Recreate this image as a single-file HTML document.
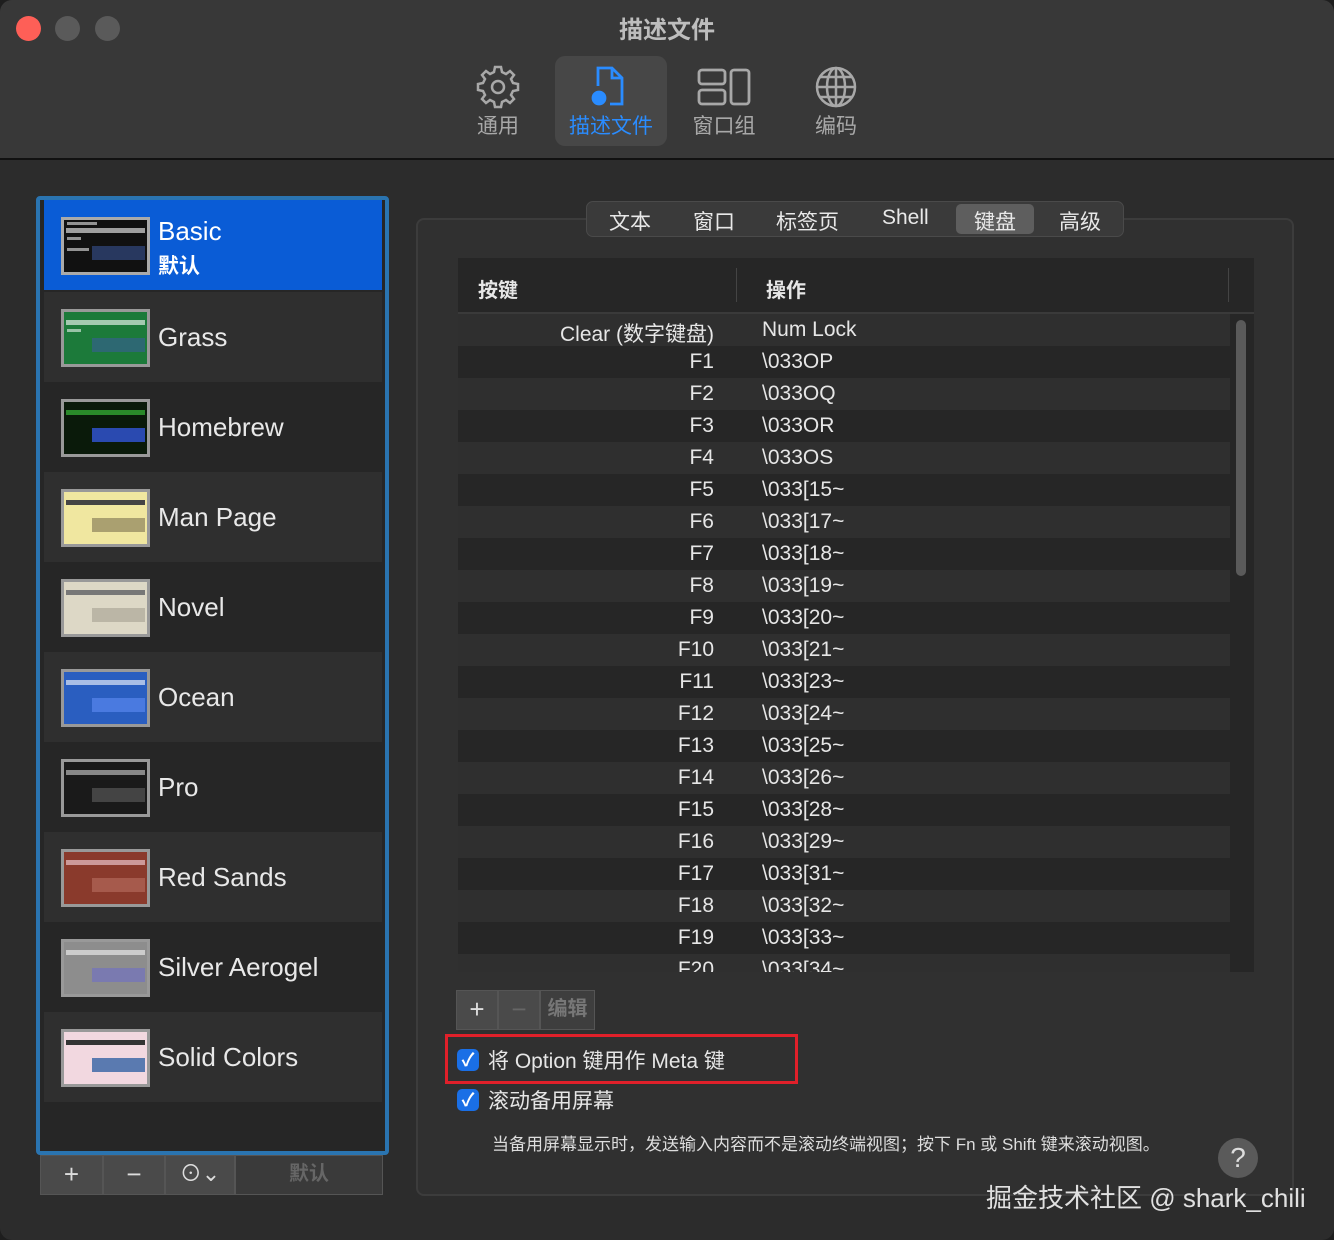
<!DOCTYPE html>
<html><head><meta charset="utf-8"><style>
*{margin:0;padding:0;box-sizing:border-box}
body{width:1334px;height:1240px;background:#1e1e1e;font-family:"Liberation Sans","Noto Sans CJK SC",sans-serif;color:#e6e6e6;position:relative;overflow:hidden}
.win{position:absolute;left:0;top:0;width:1334px;height:1240px;background:#2c2c2c;border-radius:12px;overflow:hidden}
.tb{position:absolute;left:0;top:0;width:1334px;height:160px;background:#383838;border-bottom:2px solid #111}
.dot{position:absolute;top:16px;width:25px;height:25px;border-radius:50%}
.title{position:absolute;top:10px;left:0;width:1334px;text-align:center;font-size:24px;font-weight:bold;color:#bdbdbd}
.tool{position:absolute;top:56px;width:112px;height:90px;text-align:center;font-size:21px;color:#a8a8a8}
.tool svg{display:block;margin:8px auto 0}
.tool span{display:block;margin-top:0}
.list{position:absolute;left:36px;top:196px;width:353px;height:959px;border:4px solid #2a74b0;border-radius:4px;background:#262626;overflow:hidden}
.item{position:absolute;left:4px;width:338px;height:90px}
.thumb{position:absolute;left:17px;top:17px;width:89px;height:58px;border:3px solid #999;overflow:hidden}
.thumb i{position:absolute;left:3px;height:3px;background:rgba(255,255,255,.55)}
.thumb b{position:absolute;left:2px;right:2px;top:8px;height:5px;background:rgba(255,255,255,.6)}
.thumb u{position:absolute;left:28px;right:2px;top:26px;height:14px;background:rgba(60,90,160,.55)}
.name{position:absolute;left:114px;font-size:26px;color:#e8e8e8}
.panel{position:absolute;left:416px;top:218px;width:878px;height:978px;border:2px solid #3c3c3c;border-radius:8px;background:#303030}
.seg{position:absolute;left:586px;top:201px;width:538px;height:36px;background:#3a3a3a;border:1px solid #4a4a4a;border-radius:7px;font-size:21px;color:#e8e8e8}
.seg span{position:absolute;top:4px}
.tbl{position:absolute;left:458px;top:258px;width:796px;height:714px;background:#262626;overflow:hidden}
.hdr{position:absolute;left:0;top:0;width:796px;height:54px;background:#262626;font-size:20px;font-weight:bold}
.row{position:absolute;left:0;width:772px;height:32px;font-size:21px}
.row .k{position:absolute;right:516px;top:4px;white-space:nowrap}
.row .v{position:absolute;left:304px;top:4px;white-space:nowrap}
.cb{position:absolute;width:22px;height:22px;background:#1a6fe6;border-radius:5px;color:#fff;font-size:18px;text-align:center;line-height:22px;font-weight:bold}
.btn{position:absolute;height:40px;background:#4a4a4a;border:1px solid #555;color:#ddd;text-align:center;font-size:26px;line-height:36px}
</style></head><body>
<div class="win">
<div class="tb">
<div class="dot" style="left:16px;background:#fe5f57"></div>
<div class="dot" style="left:55px;background:#5a5a5a"></div>
<div class="dot" style="left:95px;background:#5a5a5a"></div>
<div class="title">描述文件</div>
<div class="tool" style="left:442px"><svg width="46" height="46" viewBox="0 0 46 46" fill="none" stroke="#a8a8a8" stroke-width="2.5"><path d="M20 3h6l1 5 4 2 4-3 4 4-3 4 2 4 5 1v6l-5 1-2 4 3 4-4 4-4-3-4 2-1 5h-6l-1-5-4-2-4 3-4-4 3-4-2-4-5-1v-6l5-1 2-4-3-4 4-4 4 3 4-2z"/><circle cx="23" cy="23" r="6"/></svg><span>通用</span></div>
<div class="tool" style="left:555px;background:#474747;border-radius:10px;color:#2a8cff"><svg width="46" height="46" viewBox="0 0 46 46" fill="none" stroke="#2a8cff" stroke-width="2.8"><path d="M10 22V4h14l10 10v26H22"/><path d="M24 4v10h10"/><circle cx="11" cy="34" r="6" fill="#2a8cff"/></svg><span>描述文件</span></div>
<div class="tool" style="left:668px"><svg width="56" height="46" viewBox="0 0 56 46" fill="none" stroke="#a8a8a8" stroke-width="2.8"><rect x="3" y="6" width="26" height="14" rx="3"/><rect x="3" y="26" width="26" height="14" rx="3"/><rect x="35" y="6" width="18" height="34" rx="3"/></svg><span>窗口组</span></div>
<div class="tool" style="left:780px"><svg width="46" height="46" viewBox="0 0 46 46" fill="none" stroke="#a8a8a8" stroke-width="2.5"><circle cx="23" cy="23" r="19"/><ellipse cx="23" cy="23" rx="9" ry="19"/><path d="M4 23h38M7 13h32M7 33h32M23 4v38"/></svg><span>编码</span></div>
</div>

<div class="list">
<div class="item" style="top:0;background:#0a5cd6"><div class="thumb" style="background:#111;border-color:#aaa"><i style="top:2px;width:30px"></i><b></b><u></u><i style="top:17px;width:14px"></i><i style="top:28px;width:22px"></i></div><div class="name" style="top:16px;color:#fff">Basic</div><div class="name" style="top:50px;font-size:21px;color:#fff;font-weight:bold">默认</div></div>
<div class="item" style="top:92px;background:#2f2f2f"><div class="thumb" style="background:#1c7a3a"><b></b><u></u><i style="top:17px;width:14px"></i></div><div class="name" style="top:30px">Grass</div></div>
<div class="item" style="top:182px;background:#262626"><div class="thumb" style="background:#0a1a0a"><b style="background:#2a8a2a"></b><u style="background:#2a4ab0"></u></div><div class="name" style="top:30px">Homebrew</div></div>
<div class="item" style="top:272px;background:#2f2f2f"><div class="thumb" style="background:#f0e7a0"><b style="background:#444"></b><u style="background:#aaa070"></u></div><div class="name" style="top:30px">Man Page</div></div>
<div class="item" style="top:362px;background:#262626"><div class="thumb" style="background:#ddd8c6"><b style="background:#777"></b><u style="background:#bbb6a6"></u></div><div class="name" style="top:30px">Novel</div></div>
<div class="item" style="top:452px;background:#2f2f2f"><div class="thumb" style="background:#2a5ec0"><b></b><u style="background:#4a7ae0"></u></div><div class="name" style="top:30px">Ocean</div></div>
<div class="item" style="top:542px;background:#262626"><div class="thumb" style="background:#1a1a1a"><b style="background:#888"></b><u style="background:#444"></u></div><div class="name" style="top:30px">Pro</div></div>
<div class="item" style="top:632px;background:#2f2f2f"><div class="thumb" style="background:#8a3a2c"><b style="background:#c99"></b><u style="background:#a65a4c"></u></div><div class="name" style="top:30px">Red Sands</div></div>
<div class="item" style="top:722px;background:#262626"><div class="thumb" style="background:#8d8d8d"><b style="background:#ccc"></b><u style="background:#7a7ab0"></u></div><div class="name" style="top:30px">Silver Aerogel</div></div>
<div class="item" style="top:812px;background:#2f2f2f"><div class="thumb" style="background:#f2d8e0"><b style="background:#333"></b><u style="background:#5a7ab0"></u></div><div class="name" style="top:30px">Solid Colors</div></div>
</div>
<div class="btn" style="left:40px;top:1155px;width:63px">+</div>
<div class="btn" style="left:103px;top:1155px;width:62px">−</div>
<div class="btn" style="left:165px;top:1155px;width:70px;font-size:22px">⊙⌄</div>
<div class="btn" style="left:235px;top:1155px;width:148px;background:#3a3a3a;color:#666;font-size:20px;font-weight:bold">默认</div>

<div class="panel"></div>
<div class="seg"><span style="left:22px">文本</span><span style="left:106px">窗口</span><span style="left:189px">标签页</span><span style="left:295px">Shell</span><span style="left:369px;top:2px;width:78px;height:30px;background:#5e5e5e;border-radius:5px;text-align:center;padding-top:2px">键盘</span><span style="left:472px">高级</span></div>

<div class="tbl">
<div class="hdr"><span style="position:absolute;left:20px;top:16px">按键</span><span style="position:absolute;left:278px;top:10px;height:34px;border-left:1px solid #444"></span><span style="position:absolute;left:308px;top:16px">操作</span><span style="position:absolute;left:770px;top:10px;height:34px;border-left:1px solid #444"></span></div>
<div style="position:absolute;left:0;top:54px;width:796px;height:2px;background:#3a3a3a"></div>
<div style="position:absolute;left:778px;top:62px;width:10px;height:256px;background:#5a5a5a;border-radius:5px"></div>
<div class="row" style="top:56px;background:#2f2f2f"><span class="k">Clear (数字键盘)</span><span class="v">Num Lock</span></div>
<div class="row" style="top:88px"><span class="k">F1</span><span class="v">\033OP</span></div>
<div class="row" style="top:120px;background:#2f2f2f"><span class="k">F2</span><span class="v">\033OQ</span></div>
<div class="row" style="top:152px"><span class="k">F3</span><span class="v">\033OR</span></div>
<div class="row" style="top:184px;background:#2f2f2f"><span class="k">F4</span><span class="v">\033OS</span></div>
<div class="row" style="top:216px"><span class="k">F5</span><span class="v">\033[15~</span></div>
<div class="row" style="top:248px;background:#2f2f2f"><span class="k">F6</span><span class="v">\033[17~</span></div>
<div class="row" style="top:280px"><span class="k">F7</span><span class="v">\033[18~</span></div>
<div class="row" style="top:312px;background:#2f2f2f"><span class="k">F8</span><span class="v">\033[19~</span></div>
<div class="row" style="top:344px"><span class="k">F9</span><span class="v">\033[20~</span></div>
<div class="row" style="top:376px;background:#2f2f2f"><span class="k">F10</span><span class="v">\033[21~</span></div>
<div class="row" style="top:408px"><span class="k">F11</span><span class="v">\033[23~</span></div>
<div class="row" style="top:440px;background:#2f2f2f"><span class="k">F12</span><span class="v">\033[24~</span></div>
<div class="row" style="top:472px"><span class="k">F13</span><span class="v">\033[25~</span></div>
<div class="row" style="top:504px;background:#2f2f2f"><span class="k">F14</span><span class="v">\033[26~</span></div>
<div class="row" style="top:536px"><span class="k">F15</span><span class="v">\033[28~</span></div>
<div class="row" style="top:568px;background:#2f2f2f"><span class="k">F16</span><span class="v">\033[29~</span></div>
<div class="row" style="top:600px"><span class="k">F17</span><span class="v">\033[31~</span></div>
<div class="row" style="top:632px;background:#2f2f2f"><span class="k">F18</span><span class="v">\033[32~</span></div>
<div class="row" style="top:664px"><span class="k">F19</span><span class="v">\033[33~</span></div>
<div class="row" style="top:696px;background:#2f2f2f"><span class="k">F20</span><span class="v">\033[34~</span></div>
</div>

<div class="btn" style="left:456px;top:990px;width:42px;height:40px">+</div>
<div class="btn" style="left:498px;top:990px;width:42px;height:40px;color:#666">−</div>
<div class="btn" style="left:540px;top:990px;width:55px;height:40px;color:#777;font-size:20px;font-weight:bold;background:#3e3e3e">编辑</div>

<div style="position:absolute;left:445px;top:1034px;width:353px;height:50px;border:3px solid #e0202a"></div>
<div class="cb" style="left:457px;top:1049px">✓</div>
<div style="position:absolute;left:488px;top:1045px;font-size:21px">将 Option 键用作 Meta 键</div>
<div class="cb" style="left:457px;top:1089px">✓</div>
<div style="position:absolute;left:488px;top:1085px;font-size:21px">滚动备用屏幕</div>
<div style="position:absolute;left:492px;top:1130px;font-size:17px;color:#ddd">当备用屏幕显示时，发送输入内容而不是滚动终端视图；按下 Fn 或 Shift 键来滚动视图。</div>
<div style="position:absolute;left:1218px;top:1138px;width:40px;height:40px;border-radius:50%;background:#5a5a5a;color:#ddd;font-size:28px;text-align:center;line-height:40px">?</div>
<div style="position:absolute;left:986px;top:1178px;font-size:26px;color:#e0e0e0">掘金技术社区 @ shark_chili</div>
</div>
</body></html>
